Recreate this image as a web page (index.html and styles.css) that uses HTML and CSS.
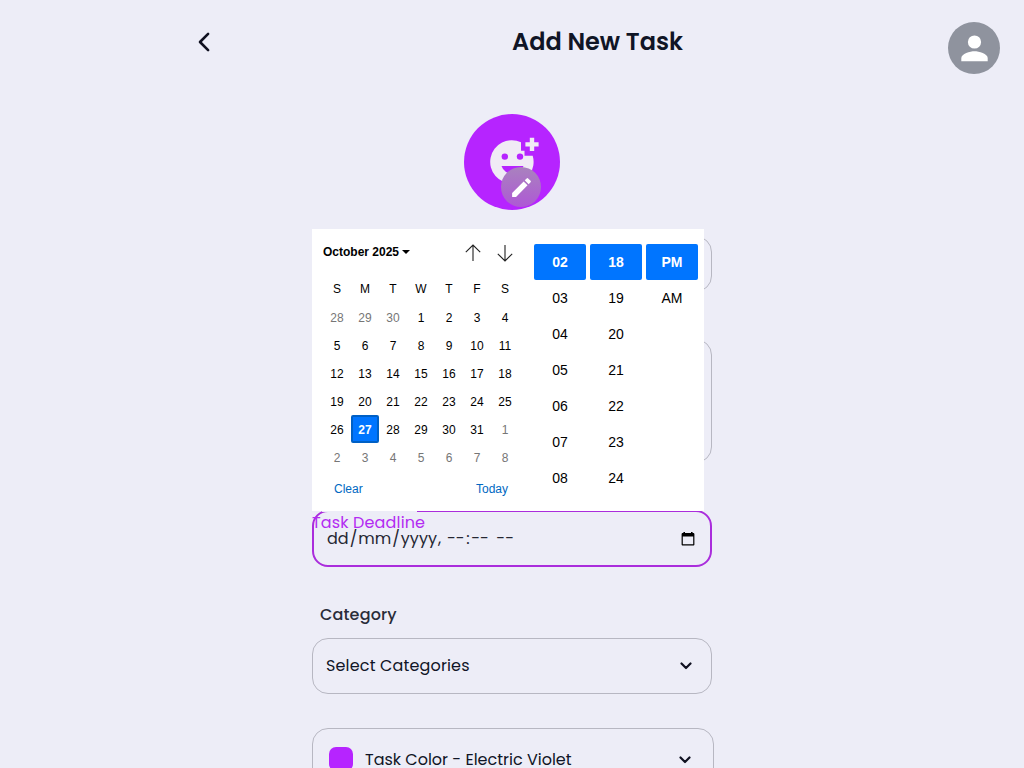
FILE: index.html
```html
<!DOCTYPE html>
<html lang="en">
<head>
<meta charset="utf-8">
<title>Add New Task</title>
<link rel="stylesheet" href="styles.css">
</head>
<body>
<header class="topbar">
  <svg class="back" viewBox="0 0 24 24"><path d="M16.1 3.8 8 12l8.1 8.2"/></svg>
  <h1>Add New Task</h1>
</header>
<svg class="avatar" viewBox="0 0 52 52"><circle cx="26" cy="26" r="26" fill="#8f939e"/><circle cx="26.5" cy="20" r="6.6" fill="#fff"/><path d="M13.3 39.3V36c0-4.4 8.8-6.8 13.2-6.8s13.2 2.4 13.2 6.8v3.3z" fill="#fff"/></svg>
<main class="form">
  <div class="emoji">
    <svg class="face" viewBox="0 0 52 52"><path fill="#f0ebf5" d="M32 8.2A21.700 21.700 0 1 0 43.700 21.700H35.500v-5H32z"/><path fill="#f0ebf5" d="M40.800 3.800h4.400v4.400h4.400v4.300h-4.400v4.500h-4.400v-4.500h-4.400V8.200h4.400z"/><circle cx="15.800" cy="22.600" r="3.200" fill="#b624ff"/><circle cx="31" cy="22.600" r="3.200" fill="#b624ff"/><path fill="#b624ff" d="M12.500 32h22a11.600 11.600 0 0 1-22 0z"/></svg>
    <span class="edit"><svg viewBox="0 0 24 24"><path fill="#fff" d="M3 17.25V21h3.75L17.81 9.94l-3.75-3.75zM20.71 7.04a1 1 0 0 0 0-1.41l-2.34-2.34a1 1 0 0 0-1.41 0l-1.83 1.83 3.75 3.75z"/></svg></span>
  </div>
  <div class="field name"></div>
  <div class="field description"></div>
  <div class="field deadline">
    <span class="notch"></span>
    <span class="deadline-label">Task Deadline</span>
    <span class="date-value"><span class="part">dd</span>/<span class="part">mm</span>/<span class="part">yyyy</span>, <span class="part blank">--</span>:<span class="part blank">--</span> <span class="part blank">--</span></span>
    <svg class="cal-icon" viewBox="0 0 14 14"><path fill="#000" fill-rule="evenodd" d="M2.4 0H4v1h6V0h1.6v1h.6c.7 0 1.200.5 1.200 1.100v10.300c0 .7-.5 1.100-1.200 1.100H1.800C1.100 13.500.6 13 .6 12.400V2.100C.6 1.500 1.100 1 1.800 1h.6zM1.800 4.600v7.700h10.400V4.600z"/></svg>
    <section class="picker">
      <div class="calendar">
        <div class="month"><b>October 2025</b><i class="caret"></i>
          <svg class="arrow up" viewBox="0 0 16 18"><path d="M8 17V1M.8 8.200 8 1l7.200 7.200"/></svg>
          <svg class="arrow" viewBox="0 0 16 18"><path d="M8 1v16M.8 9.800 8 17l7.200-7.200"/></svg>
        </div>
        <div class="days weekdays"><span>S</span><span>M</span><span>T</span><span>W</span><span>T</span><span>F</span><span>S</span></div>
        <div class="days">
          <span class="out">28</span><span class="out">29</span><span class="out">30</span><span>1</span><span>2</span><span>3</span><span>4</span>
          <span>5</span><span>6</span><span>7</span><span>8</span><span>9</span><span>10</span><span>11</span>
          <span>12</span><span>13</span><span>14</span><span>15</span><span>16</span><span>17</span><span>18</span>
          <span>19</span><span>20</span><span>21</span><span>22</span><span>23</span><span>24</span><span>25</span>
          <span>26</span><span class="picked">27</span><span>28</span><span>29</span><span>30</span><span>31</span><span class="out">1</span>
          <span class="out">2</span><span class="out">3</span><span class="out">4</span><span class="out">5</span><span class="out">6</span><span class="out">7</span><span class="out">8</span>
        </div>
        <div class="actions"><span>Clear</span><span>Today</span></div>
      </div>
      <div class="times">
        <div><b>02</b><span>03</span><span>04</span><span>05</span><span>06</span><span>07</span><span>08</span></div>
        <div><b>18</b><span>19</span><span>20</span><span>21</span><span>22</span><span>23</span><span>24</span></div>
        <div><b>PM</b><span>AM</span></div>
      </div>
    </section>
  </div>
  <div class="category-label"><span>Category</span></div>
  <div class="field select"><span class="select-text">Select Categories</span><svg class="chevron" viewBox="0 0 12 8"><path d="m1.500 1.500 4.500 4.500 4.500-4.500"/></svg></div>
  <div class="field color"><i class="swatch"></i><span class="color-text">Task Color - Electric Violet</span><svg class="chevron" viewBox="0 0 12 8"><path d="m1.500 1.500 4.500 4.500 4.500-4.500"/></svg></div>
</main>
</body>
</html>
```

FILE: styles.css
```css
* { box-sizing: border-box; }
html { height: 100%; overflow: hidden; }
body { margin: 0; height: 768px; overflow: hidden; background: #ededf7; color: #101526; font-family: Poppins, Inter, sans-serif; }
svg { display: block; flex: none; }
.topbar { display: flex; align-items: center; height: 84px; padding-left: 192px; }
.back { width: 24px; height: 24px; fill: none; stroke: #101120; stroke-width: 2.6; stroke-linecap: round; stroke-linejoin: round; }
h1 { flex: none; width: 763px; margin: 0; text-align: center; font-size: 24px; line-height: 36px; font-weight: 600; }
.avatar { position: absolute; left: 948px; top: 22px; width: 52px; height: 52px; }
.form { width: 400px; margin: 30px auto 0; }
.emoji { position: relative; width: 96px; height: 96px; margin: 0 auto; border-radius: 50%; background: #b624ff; }
.face { position: absolute; left: 24.5px; top: 20px; width: 52px; height: 52px; }
.edit { position: absolute; left: 37px; top: 53px; width: 40px; height: 40px; display: flex; align-items: center; justify-content: center; border-radius: 50%; background: linear-gradient(#a982be, #ae58d5); }
.edit svg { width: 25px; height: 25px; }
.field { border: 1px solid #b7b7c2; border-radius: 16px; display: flex; align-items: center; }
.name { height: 56px; margin-top: 26px; }
.description { height: 124px; margin-top: 47px; }
.deadline { position: relative; height: 57px; margin-top: 47px; padding: 0 15px 0 13px; border: 2px solid #aa2ddc; justify-content: space-between; }
.notch { position: absolute; left: 8px; top: -2px; width: 95px; height: 2px; background: #ededf7; }
.deadline-label { position: absolute; left: -2px; top: -1px; font-size: 16px; line-height: 23px; letter-spacing: .15px; color: #b32bf2; white-space: nowrap; }
.date-value { margin-left: -1px; font-size: 16px; line-height: 24px; white-space: nowrap; color: #242632; }
.part { padding: 0 1px; }
.blank { padding: 0 1.6px; }
.cal-icon { width: 14px; height: 14px; }
.picker { position: absolute; left: -2px; top: -283px; width: 392px; height: 282px; display: flex; background: #fff; color: #000; font: 12px/28px "Liberation Sans", Arial, sans-serif; }
.calendar { width: 222px; padding: 9px 0 0 11px; }
.month { display: flex; align-items: center; height: 28px; }
.month b { width: 76px; white-space: nowrap; }
.caret { border: 4px solid transparent; border-bottom: 0; border-top-color: #000; margin-left: 3px; }
.arrow { width: 16px; height: 18px; margin: 2px 0 0 16px; fill: none; stroke: #222; stroke-width: 1.1; }
.arrow.up { margin-left: 55px; }
.days { display: grid; grid-template-columns: repeat(7, 28px); text-align: center; }
.days span { height: 28px; }
.weekdays { margin-top: 9px; margin-bottom: 1px; }
.out { color: #767676; }
.days .picked { margin-top: -1px; background: #0075ff; color: #fff; font-weight: bold; border: 2px solid #0060c5; border-radius: 2px; line-height: 26px; }
.actions { display: flex; justify-content: space-between; padding: 3px 26px 0 11px; color: #0068c2; }
.times { display: flex; gap: 4px; padding-top: 15px; font-size: 14px; line-height: 36px; text-align: center; }
.times div { width: 52px; }
.times b, .times span { display: block; height: 36px; }
.times b { background: #0075ff; color: #fff; border-radius: 2px; }
.category-label { margin-top: 36px; padding-left: 8px; font-size: 16px; font-weight: 500; line-height: 24px; letter-spacing: .15px; color: #292c39; }
.select { height: 56px; margin-top: 11px; padding: 0 19px 0 13px; justify-content: space-between; }
.select-text, .color-text { font-size: 16px; line-height: 24px; white-space: nowrap; }
.select-text { letter-spacing: .15px; }
.chevron { width: 12px; height: 8px; fill: none; stroke: #101120; stroke-width: 2.2; stroke-linecap: round; stroke-linejoin: round; }
.color { width: 402px; height: 64px; margin-top: 34px; padding: 0 22px 0 16px; }
.swatch { width: 24px; height: 24px; border-radius: 7px; background: #b624ff; margin: 0 12px 2px 0; }
.color .chevron { margin-left: auto; }
```
